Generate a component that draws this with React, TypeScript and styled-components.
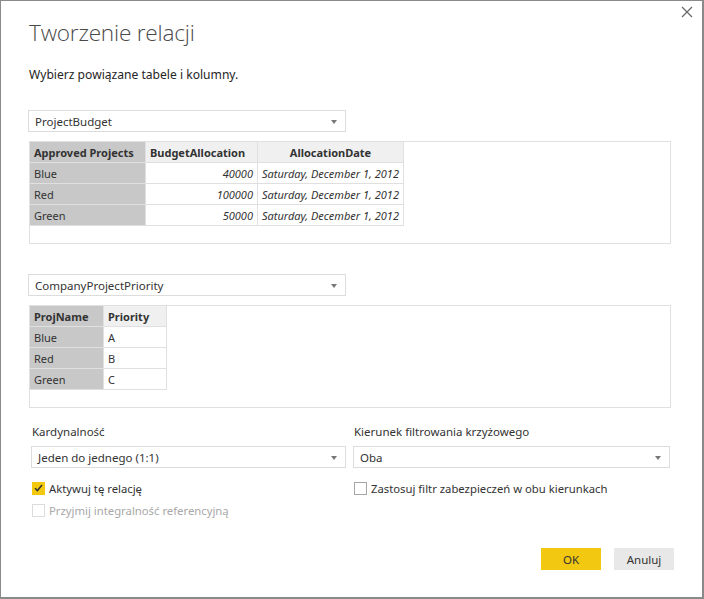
import React, { useState } from 'react';
import styled, { createGlobalStyle } from 'styled-components';

const GlobalStyle = createGlobalStyle`
  html, body {
    margin: 0;
    padding: 0;
    background: #ffffff;
  }
  body {
    font-family: 'Noto Sans', 'Open Sans', sans-serif;
    color: #333333;
  }
  * {
    box-sizing: border-box;
  }
`;

const Dialog = styled.div`
  position: relative;
  width: 704px;
  height: 599px;
  border: 1px solid #8a8a8a;
  border-right-width: 2px;
  border-bottom-width: 2px;
  padding: 16px 0 0 27px;
  display: flex;
  flex-direction: column;
`;

const CloseButton = styled.button`
  position: absolute;
  top: 4px;
  right: 8px;
  width: 14px;
  height: 14px;
  padding: 0;
  border: 0;
  background: transparent;
  display: flex;
  align-items: center;
  justify-content: center;
  cursor: pointer;
`;

const Title = styled.h1`
  margin: 0;
  font-family: 'Open Sans', 'Noto Sans', sans-serif;
  font-weight: 300;
  font-size: 22.6px;
  letter-spacing: -0.2px;
  line-height: 32px;
  color: #4a4a4a;
  padding-left: 1px;
`;

const Subtitle = styled.p`
  margin: 17px 0 0 1px;
  font-size: 12.1px;
  line-height: 18px;
  color: #252525;
`;

const SelectBox = styled.div<{ $width: number }>`
  width: ${(p) => p.$width}px;
  height: 22px;
  border: 1px solid #dcdcdc;
  display: flex;
  align-items: center;
  justify-content: space-between;
  padding: 0 8px 0 6px;
  font-size: 11.5px;
  color: #333333;
  background: #ffffff;
`;

const Caret = styled.span`
  width: 0;
  height: 0;
  border-left: 3.5px solid transparent;
  border-right: 3.5px solid transparent;
  border-top: 4px solid #777777;
  margin-top: 1px;
`;

const TableSection = styled.div<{ $top: number }>`
  margin-top: ${(p) => p.$top}px;
  display: flex;
  flex-direction: column;
  gap: 9px;
`;

const PreviewBox = styled.div`
  width: 642px;
  height: 103px;
  border: 1px solid #e0e0e0;
  margin-left: 1px;
`;

const Grid = styled.table<{ $w: number }>`
  border-collapse: collapse;
  table-layout: fixed;
  width: ${(p) => p.$w}px;
  margin: -1px 0 0 -1px;
  font-size: 11px;
`;

const HeadCell = styled.th<{ $key?: boolean; $w: number; $center?: boolean }>`
  width: ${(p) => p.$w}px;
  height: 21px;
  padding: 0 4px;
  text-align: ${(p) => (p.$center ? 'center' : 'left')};
  font-weight: 700;
  color: #333333;
  background: ${(p) => (p.$key ? '#c8c8c8' : '#f0f0f0')};
  border: 1px solid #e0e0e0;
  white-space: nowrap;
  overflow: hidden;
`;

const Cell = styled.td<{ $key?: boolean; $num?: boolean; $italic?: boolean }>`
  height: 21px;
  padding: 0 4px;
  text-align: ${(p) => (p.$num ? 'right' : 'left')};
  font-style: ${(p) => (p.$italic ? 'italic' : 'normal')};
  color: #333333;
  background: ${(p) => (p.$key ? '#c8c8c8' : '#ffffff')};
  border: 1px solid #e0e0e0;
  white-space: nowrap;
  overflow: hidden;
`;

const Options = styled.div`
  margin-top: 16px;
  display: grid;
  grid-template-columns: 322px 318px;
  padding-left: 3px;
`;

const Column = styled.div`
  display: flex;
  flex-direction: column;
`;

const FieldLabel = styled.label`
  font-size: 11.5px;
  line-height: 16px;
  color: #333333;
  padding-left: 1px;
  margin-bottom: 6px;
`;

const CheckRow = styled.div<{ $disabled?: boolean }>`
  display: flex;
  align-items: center;
  gap: 4px;
  height: 18px;
  margin-top: ${(p) => (p.$disabled ? '4px' : '11px')};
  margin-left: 1px;
  font-size: 11.3px;
  color: ${(p) => (p.$disabled ? '#a8a8a8' : '#333333')};
  cursor: ${(p) => (p.$disabled ? 'default' : 'pointer')};
  user-select: none;
`;

const Box = styled.span<{ $checked?: boolean; $disabled?: boolean }>`
  width: 13px;
  height: 13px;
  flex: none;
  display: flex;
  align-items: center;
  justify-content: center;
  border: 1px solid
    ${(p) => (p.$checked ? '#f2c811' : p.$disabled ? '#dcdcdc' : '#a6a6a6')};
  background: ${(p) => (p.$checked ? '#f2c811' : '#ffffff')};
`;

const Footer = styled.div`
  margin-top: auto;
  margin-bottom: 27px;
  display: flex;
  justify-content: flex-end;
  gap: 13px;
  padding-right: 28px;
`;

const ActionButton = styled.button<{ $primary?: boolean }>`
  width: 60px;
  height: 22px;
  border: 0;
  padding: 0;
  font-family: inherit;
  font-size: 11.5px;
  color: #333333;
  background: ${(p) => (p.$primary ? '#f2c811' : '#e8e8e8')};
  cursor: pointer;
`;

const Select = ({ value, width }: { value: string; width: number }) => (
  <SelectBox $width={width}>
    <span>{value}</span>
    <Caret />
  </SelectBox>
);

const Check = ({
  label,
  checked,
  disabled,
  onToggle,
}: {
  label: string;
  checked?: boolean;
  disabled?: boolean;
  onToggle?: () => void;
}) => (
  <CheckRow $disabled={disabled} onClick={disabled ? undefined : onToggle}>
    <Box $checked={checked} $disabled={disabled}>
      {checked && (
        <svg width="9" height="8" viewBox="0 0 9 8">
          <path d="M1 4.2 L3.4 6.6 L8 1" fill="none" stroke="#333" strokeWidth="1.5" />
        </svg>
      )}
    </Box>
    <span>{label}</span>
  </CheckRow>
);

const budget = [
  { name: 'Blue', amount: '40000' },
  { name: 'Red', amount: '100000' },
  { name: 'Green', amount: '50000' },
];

const priority = [
  { name: 'Blue', level: 'A' },
  { name: 'Red', level: 'B' },
  { name: 'Green', level: 'C' },
];

const App = () => {
  const [active, setActive] = useState(true);
  const [security, setSecurity] = useState(false);

  return (
    <>
      <GlobalStyle />
      <Dialog>
        <CloseButton aria-label="Zamknij">
          <svg width="12" height="12" viewBox="0 0 12 12">
            <path d="M1 1 L11 11 M11 1 L1 11" stroke="#666" strokeWidth="1.2" />
          </svg>
        </CloseButton>
        <Title>Tworzenie relacji</Title>
        <Subtitle>Wybierz powiązane tabele i kolumny.</Subtitle>

        <TableSection $top={26}>
          <Select value="ProjectBudget" width={318} />
          <PreviewBox>
            <Grid $w={374}>
              <thead>
                <tr>
                  <HeadCell $key $w={116}>Approved Projects</HeadCell>
                  <HeadCell $w={112}>BudgetAllocation</HeadCell>
                  <HeadCell $w={146} $center>AllocationDate</HeadCell>
                </tr>
              </thead>
              <tbody>
                {budget.map((r) => (
                  <tr key={r.name}>
                    <Cell $key>{r.name}</Cell>
                    <Cell $num $italic>{r.amount}</Cell>
                    <Cell $italic>Saturday, December 1, 2012</Cell>
                  </tr>
                ))}
              </tbody>
            </Grid>
          </PreviewBox>
        </TableSection>

        <TableSection $top={30}>
          <Select value="CompanyProjectPriority" width={318} />
          <PreviewBox>
            <Grid $w={137}>
              <thead>
                <tr>
                  <HeadCell $key $w={74}>ProjName</HeadCell>
                  <HeadCell $w={63}>Priority</HeadCell>
                </tr>
              </thead>
              <tbody>
                {priority.map((r) => (
                  <tr key={r.name}>
                    <Cell $key>{r.name}</Cell>
                    <Cell>{r.level}</Cell>
                  </tr>
                ))}
              </tbody>
            </Grid>
          </PreviewBox>
        </TableSection>

        <Options>
          <Column>
            <FieldLabel>Kardynalność</FieldLabel>
            <Select value="Jeden do jednego (1:1)" width={315} />
            <Check label="Aktywuj tę relację" checked={active} onToggle={() => setActive(!active)} />
            <Check label="Przyjmij integralność referencyjną" disabled />
          </Column>
          <Column>
            <FieldLabel>Kierunek filtrowania krzyżowego</FieldLabel>
            <Select value="Oba" width={317} />
            <Check
              label="Zastosuj filtr zabezpieczeń w obu kierunkach"
              checked={security}
              onToggle={() => setSecurity(!security)}
            />
          </Column>
        </Options>

        <Footer>
          <ActionButton $primary>OK</ActionButton>
          <ActionButton>Anuluj</ActionButton>
        </Footer>
      </Dialog>
    </>
  );
};

export default App;
